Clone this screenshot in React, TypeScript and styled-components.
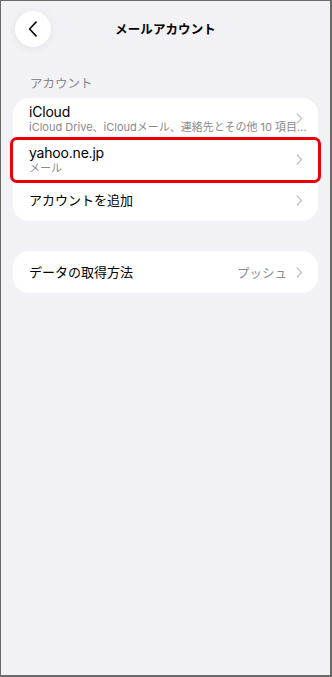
import React from 'react'
import styled, { createGlobalStyle } from 'styled-components'

const GlobalStyle = createGlobalStyle`
  html, body {
    margin: 0;
    padding: 0;
    background: #f2f2f7;
  }
  * {
    box-sizing: border-box;
  }
`

const font = `Inter, "Noto Sans CJK JP", sans-serif`

const Screen = styled.div`
  width: 332px;
  height: 677px;
  background: #f1f1f6;
  border-style: solid;
  border-color: #6a6a6a;
  border-width: 1px 2px 2px 1px;
  font-family: ${font};
  color: #000;
  overflow: hidden;
`

const Header = styled.header`
  display: grid;
  grid-template-columns: 1fr auto 1fr;
  align-items: center;
  padding: 9px 14px 0 14px;
  height: 46px;
`

const BackButton = styled.button`
  width: 36px;
  height: 36px;
  border: none;
  border-radius: 50%;
  background: #fff;
  box-shadow: 0 1px 8px rgba(0, 0, 0, 0.07);
  display: flex;
  align-items: center;
  justify-content: center;
  padding: 0;
  justify-self: start;
`

const Title = styled.h1`
  margin: 0;
  font-size: 12.5px;
  font-weight: 700;
  letter-spacing: 0.1px;
`

const Content = styled.main`
  padding: 0 12px 0 12px;
`

const SectionLabel = styled.div`
  margin: 29px 0 6px 17px;
  font-size: 12.5px;
  line-height: 16px;
  color: #8a8a8e;
`

const Card = styled.section<{ $gap?: number }>`
  background: #fff;
  border-radius: 16px;
  margin-top: ${(p) => p.$gap ?? 0}px;
`

const Row = styled.div<{ $height: number }>`
  position: relative;
  display: grid;
  grid-template-columns: 1fr auto;
  grid-template-rows: auto auto;
  align-content: center;
  column-gap: 8px;
  height: ${(p) => p.$height}px;
  padding: 0 15px 0 16px;
`

const RowTitle = styled.div`
  grid-column: 1;
  grid-row: 1;
  font-size: 14px;
  line-height: 17px;
  letter-spacing: -0.2px;
`

const RowLabel = styled.div`
  grid-column: 1;
  grid-row: 1 / span 2;
  align-self: center;
  font-size: 13px;
  line-height: 17px;
`

const RowSub = styled.div`
  grid-column: 1 / -1;
  grid-row: 2;
  font-size: 11px;
  line-height: 14px;
  color: #8a8a8e;
  white-space: nowrap;
  overflow: hidden;
  margin-right: -8px;
`

const Trail = styled.div`
  grid-column: 2;
  grid-row: 1 / span 2;
  align-self: center;
  display: flex;
  align-items: center;
  gap: 9px;
  font-size: 12.5px;
  color: #8a8a8e;
`

const Highlight = styled.div`
  position: absolute;
  top: -2px;
  bottom: -3px;
  left: -3px;
  right: -3px;
  border: 3px solid #e8000b;
  border-radius: 7px;
  pointer-events: none;
`

const Chevron = () => (
  <svg width="7" height="11" viewBox="0 0 7 11" fill="none">
    <path d="M1.2 1L5.6 5.5L1.2 10" stroke="#c4c4c7" strokeWidth="1.4" strokeLinecap="round" strokeLinejoin="round" />
  </svg>
)

const BackIcon = () => (
  <svg width="10" height="16" viewBox="0 0 10 16" fill="none">
    <path d="M8 1.2L1.6 8L8 14.8" stroke="#111" strokeWidth="1.7" strokeLinecap="round" strokeLinejoin="round" />
  </svg>
)

export default function App() {
  return (
    <>
      <GlobalStyle />
      <Screen>
        <Header>
          <BackButton aria-label="戻る">
            <BackIcon />
          </BackButton>
          <Title>メールアカウント</Title>
          <span />
        </Header>
        <Content>
          <SectionLabel>アカウント</SectionLabel>
          <Card>
            <Row $height={41}>
              <RowTitle>iCloud</RowTitle>
              <RowSub>iCloud Drive、iCloudメール、連絡先とその他 10 項目...</RowSub>
              <Trail>
                <Chevron />
              </Trail>
            </Row>
            <Row $height={41}>
              <RowTitle>yahoo.ne.jp</RowTitle>
              <RowSub>メール</RowSub>
              <Trail>
                <Chevron />
              </Trail>
              <Highlight />
            </Row>
            <Row $height={41}>
              <RowLabel>アカウントを追加</RowLabel>
              <Trail>
                <Chevron />
              </Trail>
            </Row>
          </Card>
          <Card $gap={30}>
            <Row $height={42}>
              <RowLabel>データの取得方法</RowLabel>
              <Trail>
                プッシュ
                <Chevron />
              </Trail>
            </Row>
          </Card>
        </Content>
      </Screen>
    </>
  )
}
